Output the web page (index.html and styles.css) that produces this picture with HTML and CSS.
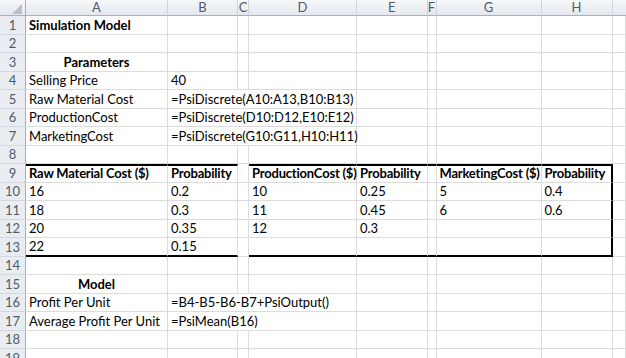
FILE: index.html
```html
<!DOCTYPE html>
<html>
<head>
<meta charset="utf-8">
<link rel="stylesheet" href="styles.css">
</head>
<body>
<div class="sheet">
  <div class="ch corner"><svg class="tri" width="26" height="16" viewBox="0 0 26 16"><polygon points="22,4 22,14 12,14" fill="#b9bfc6"/></svg></div>
  <div class="ch">A</div><div class="ch">B</div><div class="ch">C</div><div class="ch">D</div><div class="ch">E</div><div class="ch">F</div><div class="ch">G</div><div class="ch">H</div><div class="ch last"></div>

  <div class="rh">1</div><div class="c b">Simulation Model</div><div class="c"></div><div class="c"></div><div class="c"></div><div class="c"></div><div class="c"></div><div class="c"></div><div class="c"></div><div class="c"></div>
  <div class="rh">2</div><div class="c"></div><div class="c"></div><div class="c"></div><div class="c"></div><div class="c"></div><div class="c"></div><div class="c"></div><div class="c"></div><div class="c"></div>
  <div class="rh">3</div><div class="c b ctr">Parameters</div><div class="c"></div><div class="c"></div><div class="c"></div><div class="c"></div><div class="c"></div><div class="c"></div><div class="c"></div><div class="c"></div>
  <div class="rh">4</div><div class="c">Selling Price</div><div class="c">40</div><div class="c"></div><div class="c"></div><div class="c"></div><div class="c"></div><div class="c"></div><div class="c"></div><div class="c"></div>
  <div class="rh">5</div><div class="c">Raw Material Cost</div><div class="c span3">=PsiDiscrete(A10:A13,B10:B13)</div><div class="c"></div><div class="c"></div><div class="c"></div><div class="c"></div><div class="c"></div>
  <div class="rh">6</div><div class="c">ProductionCost</div><div class="c span3">=PsiDiscrete(D10:D12,E10:E12)</div><div class="c"></div><div class="c"></div><div class="c"></div><div class="c"></div><div class="c"></div>
  <div class="rh">7</div><div class="c">MarketingCost</div><div class="c span3">=PsiDiscrete(G10:G11,H10:H11)</div><div class="c"></div><div class="c"></div><div class="c"></div><div class="c"></div><div class="c"></div>
  <div class="rh">8</div><div class="c"></div><div class="c"></div><div class="c"></div><div class="c"></div><div class="c"></div><div class="c"></div><div class="c"></div><div class="c"></div><div class="c"></div>

  <div class="rh">9</div><div class="c b th top">Raw Material Cost ($)</div><div class="c b th top">Probability</div><div class="c"></div><div class="c b th top">ProductionCost ($)</div><div class="c b th top">Probability</div><div class="c top"></div><div class="c b th top">MarketingCost ($)</div><div class="c b th top rgt">Probability</div><div class="c"></div>
  <div class="rh">10</div><div class="c">16</div><div class="c">0.2</div><div class="c"></div><div class="c">10</div><div class="c">0.25</div><div class="c"></div><div class="c">5</div><div class="c rgt">0.4</div><div class="c"></div>
  <div class="rh">11</div><div class="c">18</div><div class="c">0.3</div><div class="c"></div><div class="c">11</div><div class="c">0.45</div><div class="c"></div><div class="c">6</div><div class="c rgt">0.6</div><div class="c"></div>
  <div class="rh">12</div><div class="c">20</div><div class="c">0.35</div><div class="c"></div><div class="c">12</div><div class="c">0.3</div><div class="c"></div><div class="c"></div><div class="c rgt"></div><div class="c"></div>
  <div class="rh">13</div><div class="c bot">22</div><div class="c bot">0.15</div><div class="c"></div><div class="c bot"></div><div class="c bot"></div><div class="c bot"></div><div class="c bot"></div><div class="c bot rgt"></div><div class="c"></div>

  <div class="rh">14</div><div class="c"></div><div class="c"></div><div class="c"></div><div class="c"></div><div class="c"></div><div class="c"></div><div class="c"></div><div class="c"></div><div class="c"></div>
  <div class="rh">15</div><div class="c b ctr">Model</div><div class="c"></div><div class="c"></div><div class="c"></div><div class="c"></div><div class="c"></div><div class="c"></div><div class="c"></div><div class="c"></div>
  <div class="rh">16</div><div class="c">Profit Per Unit</div><div class="c span3">=B4-B5-B6-B7+PsiOutput()</div><div class="c"></div><div class="c"></div><div class="c"></div><div class="c"></div><div class="c"></div>
  <div class="rh">17</div><div class="c">Average Profit Per Unit</div><div class="c span3">=PsiMean(B16)</div><div class="c"></div><div class="c"></div><div class="c"></div><div class="c"></div><div class="c"></div>
  <div class="rh">18</div><div class="c"></div><div class="c"></div><div class="c"></div><div class="c"></div><div class="c"></div><div class="c"></div><div class="c"></div><div class="c"></div><div class="c"></div>
  <div class="rh">19</div><div class="c"></div><div class="c"></div><div class="c"></div><div class="c"></div><div class="c"></div><div class="c"></div><div class="c"></div><div class="c"></div><div class="c"></div>
</div>
</body>
</html>
```
FILE: styles.css
```css
html, body {
  margin: 0;
  padding: 0;
  background: #ffffff;
  overflow: hidden;
}
.sheet {
  display: grid;
  grid-template-columns: 26px 142px 70px 11px 108px 70.5px 9px 105px 71px 1fr;
  grid-template-rows: 16px repeat(19, 18.5px);
  width: 626px;
  font-family: Lato, "Liberation Sans", sans-serif;
  font-size: 13px;
  color: #000;
}
.ch {
  box-sizing: border-box;
  background: linear-gradient(#f6f8fa, #e4e8ed);
  border-right: 1px solid #cfd4da;
  border-bottom: 1px solid #a9b0b9;
  color: #4f5b69;
  font-size: 13px;
  line-height: 15px;
  text-align: center;
  overflow: hidden;
}
.corner {
  border-right-color: #a9b0b9;
}
.tri {
  display: block;
}
.ch.last {
  border-right: none;
}
.rh {
  box-sizing: border-box;
  background: #e9edf1;
  border-right: 1px solid #a9b0b9;
  border-bottom: 1px solid #d3d8de;
  color: #4f5b69;
  display: flex;
  align-items: flex-end;
  justify-content: center;
  padding-bottom: 1px;
  line-height: 15px;
}
.c {
  box-sizing: border-box;
  border-right: 1px solid #dcdcdc;
  border-bottom: 1px solid #dcdcdc;
  padding: 0 3px 1px;
  display: flex;
  align-items: flex-end;
  white-space: nowrap;
  line-height: 15px;
  min-width: 0;
}
.b {
  font-weight: bold;
}
.th {
  letter-spacing: -0.2px;
}
.ctr {
  justify-content: center;
}
.span3 {
  grid-column: span 3;
}
.top {
  border-top: 2px solid #000;
}
.bot {
  border-bottom: 2px solid #000;
}
.rgt {
  border-right: 2px solid #000;
}
```
